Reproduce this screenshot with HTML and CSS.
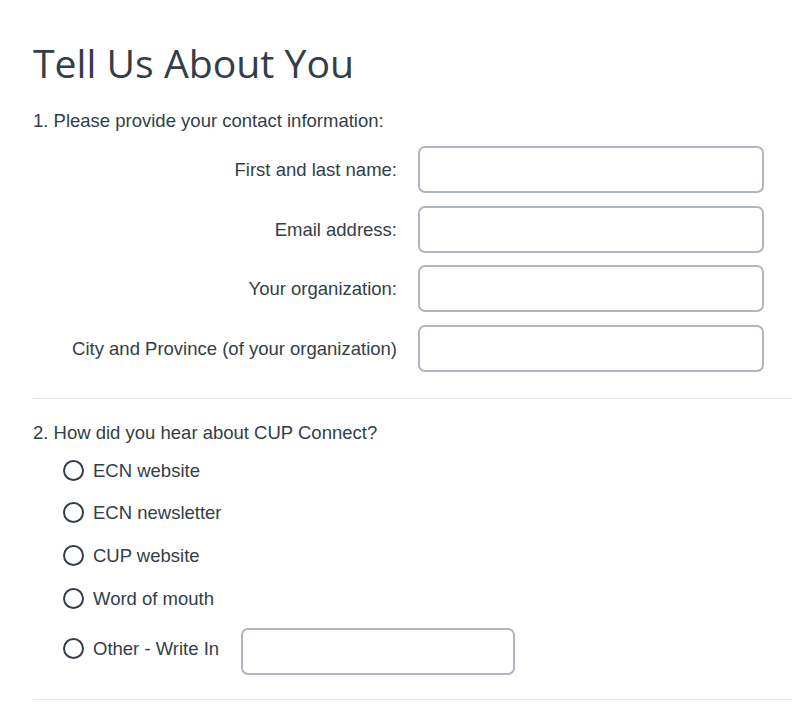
FILE: index.html
```html
<!DOCTYPE html>
<html>
<head>
<meta charset="utf-8">
<link rel="stylesheet" href="styles.css">
</head>
<body>
<div class="page">
  <h1 class="title">Tell Us About You</h1>
  <section class="question q1">
    <div class="q-title">1. Please provide your contact information:</div>
    <div class="fields">
      <label class="field-label">First and last name:</label><input class="text-input" type="text">
      <label class="field-label">Email address:</label><input class="text-input" type="text">
      <label class="field-label">Your organization:</label><input class="text-input" type="text">
      <label class="field-label">City and Province (of your organization)</label><input class="text-input" type="text">
    </div>
  </section>
  <section class="question q2">
    <div class="q-title">2. How did you hear about CUP Connect?</div>
    <div class="options">
      <div class="option"><span class="radio"></span><span class="opt-text">ECN website</span></div>
      <div class="option"><span class="radio"></span><span class="opt-text">ECN newsletter</span></div>
      <div class="option"><span class="radio"></span><span class="opt-text">CUP website</span></div>
      <div class="option"><span class="radio"></span><span class="opt-text">Word of mouth</span></div>
      <div class="option other"><span class="radio"></span><span class="opt-text">Other - Write In</span><input class="text-input other-input" type="text"></div>
    </div>
  </section>
</div>
</body>
</html>
```

FILE: styles.css
```css
* { box-sizing: border-box; }
html, body { margin: 0; padding: 0; background: #fff; }
body {
  font-family: "Liberation Sans", Arial, sans-serif;
  color: #333e48;
}
.page {
  padding: 36px 0 0 33px;
}
.title {
  margin: 0 0 20px 0;
  font-family: "Open Sans", sans-serif;
  font-weight: 400;
  font-size: 39.2px;
  line-height: 54px;
  color: #333e48;
  letter-spacing: 0;
}
.question {
  border-bottom: 1px solid #e6e7e8;
}
.q-title {
  font-size: 18.5px;
  line-height: 21px;
}
.q1 { padding-bottom: 26px; }
.fields {
  display: grid;
  grid-template-columns: 364px 346px;
  column-gap: 21px;
  row-gap: 12.5px;
  align-items: center;
  margin-top: 15px;
}
.field-label {
  text-align: right;
  font-size: 18.5px;
  line-height: 21px;
}
.text-input {
  height: 47px;
  border: 2px solid #b0b6bf;
  border-radius: 7px;
  background: #fff;
  outline: none;
  margin: 0;
}
.q2 { padding-top: 23px; padding-bottom: 24px; }
.options {
  margin-top: 17px;
  padding-left: 30px;
  display: flex;
  flex-direction: column;
  gap: 21.7px;
}
.option {
  display: flex;
  align-items: center;
  gap: 9px;
  font-size: 18.5px;
  line-height: 21px;
}
.radio {
  width: 21px;
  height: 21px;
  border: 2px solid #333e48;
  border-radius: 50%;
  flex: none;
}
.other {
  align-items: flex-start;
  margin-top: -2px;
}
.other .radio, .other .opt-text { margin-top: 10px; }
.other-input {
  width: 274px;
  margin-left: 13px;
}
```
